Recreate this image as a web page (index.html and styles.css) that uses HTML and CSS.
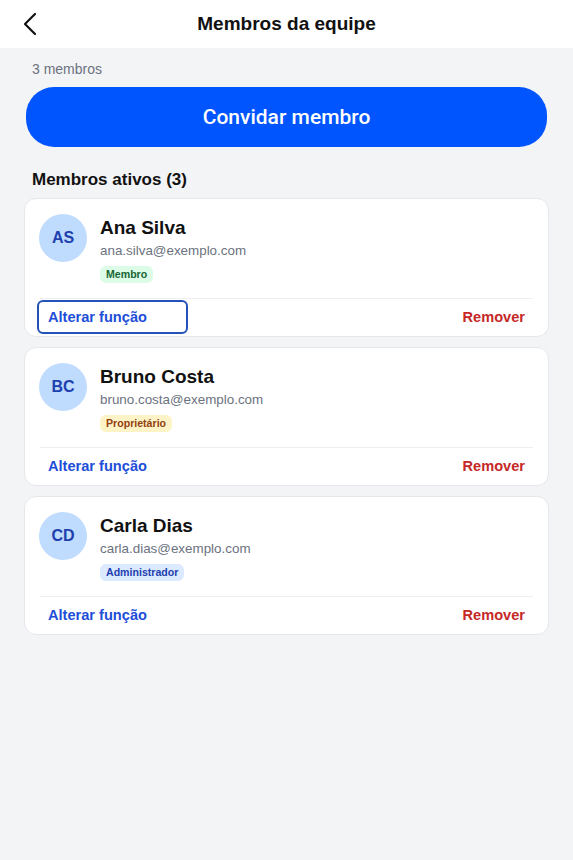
FILE: index.html
```html
<!DOCTYPE html>
<html lang="pt-BR">
<head>
  <meta charset="utf-8">
  <title>Membros da equipe</title>
  <link rel="stylesheet" href="styles.css">
</head>
<body>
  <header class="topbar">
    <button class="back" aria-label="Voltar">
      <svg width="16" height="24" viewBox="0 0 16 24"><path d="M13 2 L3 12 L13 22" fill="none" stroke="#111" stroke-width="2.2" stroke-linecap="round" stroke-linejoin="round"/></svg>
    </button>
    <h1 class="title">Membros da equipe</h1>
  </header>

  <main class="content">
    <p class="count">3 membros</p>
    <button class="invite">Convidar membro</button>

    <h2 class="section_title">Membros ativos (3)</h2>

    <div class="card">
      <div class="member">
        <div class="avatar">AS</div>
        <div class="info">
          <div class="name">Ana Silva</div>
          <div class="email">ana.silva@exemplo.com</div>
          <span class="badge badge_member">Membro</span>
        </div>
      </div>
      <div class="actions">
        <button class="action change focused">Alterar função</button>
        <button class="action remove">Remover</button>
      </div>
    </div>

    <div class="card">
      <div class="member">
        <div class="avatar">BC</div>
        <div class="info">
          <div class="name">Bruno Costa</div>
          <div class="email">bruno.costa@exemplo.com</div>
          <span class="badge badge_owner">Proprietário</span>
        </div>
      </div>
      <div class="actions">
        <button class="action change">Alterar função</button>
        <button class="action remove">Remover</button>
      </div>
    </div>

    <div class="card">
      <div class="member">
        <div class="avatar">CD</div>
        <div class="info">
          <div class="name">Carla Dias</div>
          <div class="email">carla.dias@exemplo.com</div>
          <span class="badge badge_admin">Administrador</span>
        </div>
      </div>
      <div class="actions">
        <button class="action change">Alterar função</button>
        <button class="action remove">Remover</button>
      </div>
    </div>
  </main>
</body>
</html>
```

FILE: styles.css
```css
* {
  box-sizing: border-box;
}
html, body {
  margin: 0;
  padding: 0;
}
body {
  background-color: #f3f4f6;
  font-family: "Liberation Sans", Arial, sans-serif;
  color: #111827;
  min-height: 860px;
}
button {
  font-family: inherit;
  border: none;
  background: none;
  cursor: pointer;
}

.topbar {
  height: 48px;
  background-color: white;
  display: flex;
  align-items: center;
  justify-content: center;
  position: relative;
}
.back {
  position: absolute;
  left: 18px;
  top: 12px;
  padding: 0;
  width: 24px;
  height: 24px;
  display: flex;
  align-items: center;
  justify-content: center;
}
.title {
  margin: 0;
  font-size: 19px;
  font-weight: bold;
  color: #111;
}

.content {
  padding: 0 24px;
}
.count {
  margin: 0;
  padding: 13px 0 0 8px;
  height: 39px;
  font-size: 14px;
  color: #6b7280;
}
.invite {
  display: block;
  width: calc(100% - 4px);
  margin-left: 2px;
  height: 60px;
  border-radius: 28px;
  background-color: #0055ff;
  color: white;
  font-family: Roboto, "Liberation Sans", sans-serif;
  font-weight: 500;
  font-size: 21px;
}
.section_title {
  margin: 0;
  padding: 23px 0 0 8px;
  height: 51px;
  font-size: 17px;
  font-weight: bold;
  color: #111;
}

.card {
  width: 525px;
  background-color: white;
  border: 1px solid #e5e7eb;
  border-radius: 12px;
  padding: 15px 15px 2px 15px;
  margin-bottom: 10px;
}
.member {
  display: flex;
  gap: 14px;
}
.avatar {
  width: 48px;
  height: 48px;
  margin-left: -1px;
  border-radius: 50%;
  background-color: #bfdbfe;
  color: #1e40af;
  font-weight: bold;
  font-size: 16px;
  display: flex;
  align-items: center;
  justify-content: center;
  flex-shrink: 0;
}
.info {
  display: flex;
  flex-direction: column;
  align-items: flex-start;
  padding-top: 2px;
}
.name {
  font-size: 19px;
  font-weight: bold;
  color: #111;
  line-height: 24px;
  margin-left: -1px;
}
.email {
  font-size: 13.4px;
  color: #6b7280;
  line-height: 22px;
  margin-left: -1px;
}
.badge {
  margin-top: 4px;
  margin-left: -1px;
  padding: 0 6px;
  font-size: 10.6px;
  font-weight: bold;
  line-height: 17px;
  border-radius: 6px;
}
.badge_member {
  background-color: #dcfce7;
  color: #166534;
}
.badge_owner {
  background-color: #fef3c7;
  color: #92400e;
}
.badge_admin {
  background-color: #dbeafe;
  color: #1e40af;
}

.actions {
  margin-top: 15px;
  border-top: 1px solid #eceef1;
  display: flex;
  justify-content: space-between;
  padding-top: 1px;
}
.action {
  font-size: 14.6px;
  font-weight: bold;
  height: 34px;
  min-width: 151px;
  padding: 0 6px 0 9px;
  border: 2px solid transparent;
  border-radius: 6px;
}
.change {
  color: #1d4ed8;
  text-align: left;
  margin-left: -3px;
}
.remove {
  color: #c62828;
  text-align: right;
}
.focused {
  border-color: #2453b8;
}
```
